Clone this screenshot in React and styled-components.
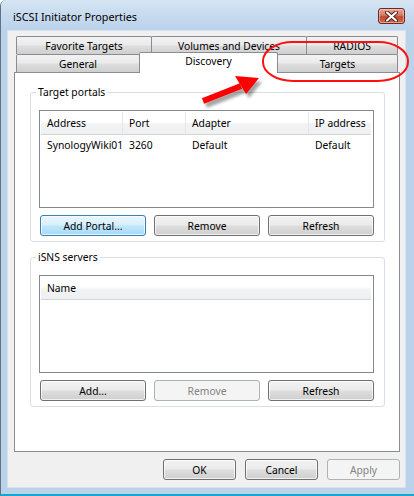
import React from "react";
import styled, { createGlobalStyle } from "styled-components";

const GlobalStyle = createGlobalStyle`
  html, body { margin: 0; padding: 0; background: #ffffff; }
  body { font-family: "Noto Sans", "Open Sans", sans-serif; font-size: 10.3px; color: #000; }
  * { box-sizing: border-box; }
`;

const Window = styled.div`
  position: relative;
  width: 414px;
  height: 496px;
  display: flex;
  flex-direction: column;
  background: #bad2ea;
  border-left: 1px solid #5f7286;
  border-bottom: 2px solid #17a8cf;
  border-top-left-radius: 6px;
  padding: 0 8px 6px 6px;
  overflow: hidden;
`;

const TitleBar = styled.div`
  height: 30px;
  flex: 0 0 30px;
  display: flex;
  align-items: center;
  justify-content: space-between;
  margin: 0 -8px 0 -6px;
  padding: 0 9px 0 12px;
  background: linear-gradient(180deg, #d6e5f4 0%, #c8dbef 45%, #bcd3eb 100%);
`;

const Title = styled.div`
  font-size: 10.8px;
  color: #000;
  padding-top: 2px;
`;

const CloseButton = styled.div`
  width: 27px;
  height: 16px;
  margin-top: 2px;
  border: 1px solid #6b2a21;
  border-radius: 3px;
  background: linear-gradient(180deg, #e8a898 0%, #d47a66 45%, #c04a30 55%, #d46a50 100%);
  display: flex;
  align-items: center;
  justify-content: center;
  box-shadow: inset 0 0 0 1px rgba(255, 220, 210, 0.5);
`;

const Client = styled.div`
  flex: 1;
  display: flex;
  flex-direction: column;
  background: #f0f0f0;
  border: 1px solid #d7e2ee;
  padding: 5px 5px 0 6px;
`;

const TabStrip = styled.div`
  display: flex;
  flex-direction: column;
  padding-left: 2px;
`;

const TabRow = styled.div`
  display: flex;
  height: 18px;
`;

const Tab = styled.div`
  width: ${p => p.$w}px;
  height: ${p => (p.$selected ? 21 : 18)}px;
  margin: ${p => (p.$selected ? "-2px 0 -1px" : "0")};
  position: relative;
  z-index: ${p => (p.$selected ? 2 : 1)};
  border: 1px solid #898c95;
  border-bottom: none;
  margin-left: ${p => (p.$first ? 0 : -1)}px;
  border-radius: 2px 2px 0 0;
  background: ${p =>
    p.$selected
      ? "#ffffff"
      : "linear-gradient(180deg, #f2f2f2 0%, #ebebeb 45%, #dddddd 55%, #cfcfcf 100%)"};
  display: flex;
  justify-content: center;
  padding-top: ${p => (p.$selected ? 1 : 2)}px;
  line-height: 14px;
  white-space: nowrap;
`;

const Page = styled.div`
  height: 380px;
  background: #ffffff;
  border: 1px solid #898c95;
  padding: 0 14px 0 15px;
  display: flex;
  flex-direction: column;
`;

const Group = styled.fieldset`
  margin: ${p => p.$top}px 0 0;
  padding: 11px 10px 5px 8px;
  border: 1px solid #d5dfe5;
  border-radius: 3px;
  min-width: 0;
`;

const Legend = styled.legend`
  margin-left: -3px;
  padding: 0 2px;
  line-height: 14px;
  color: #000;
`;

const List = styled.div`
  height: 98px;
  border: 1px solid #828790;
  background: #ffffff;
  padding: 1px 2px 0 1px;
`;

const HeaderRow = styled.div`
  display: flex;
  height: 23px;
  background: linear-gradient(180deg, #ffffff 0%, #ffffff 45%, #f2f3f5 55%, #eff0f2 100%);
  border-bottom: 1px solid #d5d5d5;
`;

const HeaderCell = styled.div`
  width: ${p => (p.$w ? `${p.$w}px` : "auto")};
  flex: ${p => (p.$w ? "0 0 auto" : "1")};
  padding-left: 6px;
  display: flex;
  align-items: center;
  border-right: ${p => (p.$last ? "none" : "1px solid #e4e6ea")};
  color: #000;
`;

const DataRow = styled.div`
  display: flex;
  height: 20px;
  align-items: center;
`;

const DataCell = styled.div`
  width: ${p => p.$w}px;
  padding-left: 6px;
  white-space: nowrap;
`;

const ButtonRow = styled.div`
  display: grid;
  grid-template-columns: repeat(3, 106px);
  gap: 8px;
  margin: 7px 1px 0;
`;

const Button = styled.div`
  height: 21px;
  width: ${p => (p.$w ? `${p.$w}px` : "auto")};
  display: flex;
  align-items: center;
  justify-content: center;
  border-radius: 3px;
  border: 1px solid ${p => (p.$disabled ? "#adb2b5" : p.$default ? "#3c7fb1" : "#707070")};
  background: ${p =>
    p.$disabled
      ? "#f4f4f4"
      : p.$default
      ? "linear-gradient(180deg, #eaf6fd 0%, #d9f0fc 45%, #bee6fd 55%, #a7d9f5 100%)"
      : "linear-gradient(180deg, #f2f2f2 0%, #ebebeb 45%, #dddddd 55%, #cfcfcf 100%)"};
  box-shadow: ${p => (p.$disabled ? "none" : "inset 0 0 0 1px rgba(255,255,255,0.7)")};
  color: ${p => (p.$disabled ? "#838383" : "#000")};
  white-space: nowrap;
`;

const DialogButtons = styled.div`
  display: flex;
  justify-content: flex-end;
  gap: 9px;
  margin-top: 7px;
`;

const Overlay = styled.svg`
  position: absolute;
  left: -1px;
  top: 0;
  z-index: 10;
  pointer-events: none;
`;

const portalCols = [82, 63, 123, 62];

function CloseGlyph ()
{
  return (
    <svg width="13" height="11" viewBox="0 0 13 11">
      <path d="M2 1.5 L11 9.5 M11 1.5 L2 9.5" stroke="#4a1d16" strokeWidth="4" strokeLinecap="round" />
      <path d="M2 1.5 L11 9.5 M11 1.5 L2 9.5" stroke="#ffffff" strokeWidth="2.2" strokeLinecap="round" />
    </svg>
  );
}

function Annotation ()
{
  return (
    <Overlay width="414" height="496" viewBox="0 0 414 496">
      <defs>
        <filter id="blur" x="-20%" y="-20%" width="140%" height="140%">
          <feGaussianBlur stdDeviation="1.6" />
        </filter>
      </defs>
      <g transform="translate(3 4)" opacity="0.45" filter="url(#blur)">
        <line x1="203" y1="101" x2="241" y2="86" stroke="#333" strokeWidth="6" />
        <polygon points="235,76 259,78 246,94" fill="#333" />
      </g>
      <line x1="203" y1="101" x2="241" y2="86" stroke="#ff0000" strokeWidth="6" />
      <polygon points="235,76 259,78 246,94" fill="#ff0000" />
      <rect x="263" y="42" width="145" height="39" rx="30" ry="19" fill="none" stroke="#ff1010" strokeWidth="2" />
    </Overlay>
  );
}

export default function App ()
{
  return (
    <>
      <GlobalStyle />
      <Window>
        <TitleBar>
          <Title>iSCSI Initiator Properties</Title>
          <CloseButton><CloseGlyph /></CloseButton>
        </TitleBar>

        <Client>
          <TabStrip>
            <TabRow>
              <Tab $w={136} $first>Favorite Targets</Tab>
              <Tab $w={156}>Volumes and Devices</Tab>
              <Tab $w={92}>RADIOS</Tab>
            </TabRow>
            <TabRow>
              <Tab $w={124} $first>General</Tab>
              <Tab $w={139} $selected>Discovery</Tab>
              <Tab $w={121}>Targets</Tab>
            </TabRow>
          </TabStrip>

          <Page>
            <Group $top={12}>
              <Legend>Target portals</Legend>
              <List>
                <HeaderRow>
                  <HeaderCell $w={portalCols[ 0 ]}>Address</HeaderCell>
                  <HeaderCell $w={portalCols[ 1 ]}>Port</HeaderCell>
                  <HeaderCell $w={portalCols[ 2 ]}>Adapter</HeaderCell>
                  <HeaderCell $last>IP address</HeaderCell>
                </HeaderRow>
                <DataRow>
                  <DataCell $w={portalCols[ 0 ]}>SynologyWiki01</DataCell>
                  <DataCell $w={portalCols[ 1 ]}>3260</DataCell>
                  <DataCell $w={portalCols[ 2 ]}>Default</DataCell>
                  <DataCell $w={portalCols[ 3 ]}>Default</DataCell>
                </DataRow>
              </List>
              <ButtonRow>
                <Button $default>Add Portal...</Button>
                <Button>Remove</Button>
                <Button>Refresh</Button>
              </ButtonRow>
            </Group>

            <Group $top={8}>
              <Legend>iSNS servers</Legend>
              <List>
                <HeaderRow>
                  <HeaderCell $last>Name</HeaderCell>
                </HeaderRow>
              </List>
              <ButtonRow>
                <Button>Add...</Button>
                <Button $disabled>Remove</Button>
                <Button>Refresh</Button>
              </ButtonRow>
            </Group>
          </Page>

          <DialogButtons>
            <Button $w={73}>OK</Button>
            <Button $w={73}>Cancel</Button>
            <Button $w={73} $disabled>Apply</Button>
          </DialogButtons>
        </Client>

        <Annotation />
      </Window>
    </>
  );
}
